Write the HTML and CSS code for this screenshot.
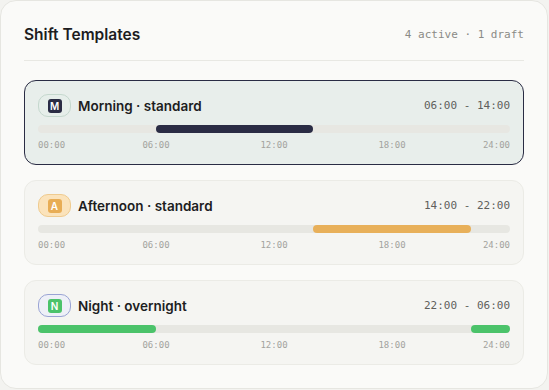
FILE: index.html
```html
<!DOCTYPE html>
<html>
<head>
<meta charset="utf-8">
<link rel="stylesheet" href="styles.css">
</head>
<body>
<div class="panel">
  <div class="panel-head">
    <h1 class="panel-title">Shift Templates</h1>
    <span class="panel-meta">4 active · 1 draft</span>
  </div>
  <div class="list">
    <div class="shift shift--active">
      <div class="shift-top">
        <span class="badge badge--m"><span class="badge-sq">M</span></span>
        <span class="shift-name">Morning · standard</span>
        <span class="shift-time">06:00 - 14:00</span>
      </div>
      <div class="track">
        <span class="bar bar--navy" style="left:25%;width:33.333%"></span>
      </div>
      <div class="ticks">
        <span class="tick tick--first">00:00</span>
        <span class="tick">06:00</span>
        <span class="tick">12:00</span>
        <span class="tick">18:00</span>
        <span class="tick tick--last">24:00</span>
      </div>
    </div>
    <div class="shift">
      <div class="shift-top">
        <span class="badge badge--a"><span class="badge-sq">A</span></span>
        <span class="shift-name">Afternoon · standard</span>
        <span class="shift-time">14:00 - 22:00</span>
      </div>
      <div class="track">
        <span class="bar bar--orange" style="left:58.333%;width:33.333%"></span>
      </div>
      <div class="ticks">
        <span class="tick tick--first">00:00</span>
        <span class="tick">06:00</span>
        <span class="tick">12:00</span>
        <span class="tick">18:00</span>
        <span class="tick tick--last">24:00</span>
      </div>
    </div>
    <div class="shift">
      <div class="shift-top">
        <span class="badge badge--n"><span class="badge-sq">N</span></span>
        <span class="shift-name">Night · overnight</span>
        <span class="shift-time">22:00 - 06:00</span>
      </div>
      <div class="track">
        <span class="bar bar--green" style="left:0;width:25%"></span>
        <span class="bar bar--green" style="left:91.667%;width:8.333%"></span>
      </div>
      <div class="ticks">
        <span class="tick tick--first">00:00</span>
        <span class="tick">06:00</span>
        <span class="tick">12:00</span>
        <span class="tick">18:00</span>
        <span class="tick tick--last">24:00</span>
      </div>
    </div>
  </div>
</div>
</body>
</html>
```
FILE: styles.css
```css
* { box-sizing: border-box; }
html, body { margin: 0; padding: 0; background: #f3f3f0; }
body {
  font-family: Inter, "Noto Sans", sans-serif;
  color: #1d1d1f;
}
.panel {
  width: 548px;
  background: #fafaf8;
  border: 1px solid #e6e6e1;
  border-radius: 16px;
  padding: 23px 23px 23px;
}
.panel-head {
  display: flex;
  align-items: center;
  justify-content: space-between;
  height: 37px;
  padding-bottom: 15px;
  border-bottom: 1px solid #e8e8e3;
}
.panel-title {
  margin: 0;
  font-size: 15.5px;
  font-weight: 600;
  line-height: 20px;
  letter-spacing: 0;
}
.panel-meta {
  font-family: "DejaVu Sans Mono", monospace;
  font-size: 11px;
  color: #8a8a86;
  line-height: 20px;
}
.list {
  display: flex;
  flex-direction: column;
  gap: 15px;
  margin-top: 19px;
}
.shift {
  background: #f5f5f2;
  border: 1px solid #ebebe6;
  border-radius: 12px;
  padding: 13px 13px 13px;
}
.shift--active {
  background: #e8eeeb;
  border-color: #2a2c44;
}
.shift-top {
  display: flex;
  align-items: center;
  height: 23px;
}
.badge {
  display: flex;
  align-items: center;
  justify-content: center;
  width: 33px;
  height: 23px;
  border-radius: 10px;
  border: 1px solid;
  margin-right: 7px;
}
.badge-sq {
  display: flex;
  align-items: center;
  justify-content: center;
  width: 14px;
  height: 14px;
  border-radius: 3px;
  color: #fff;
  font-size: 10px;
  font-weight: 600;
  line-height: 1;
}
.badge--m { background: #e6eeea; border-color: #c5d8ce; }
.badge--m .badge-sq { background: #2a2c44; }
.badge--a { background: #fbe3bb; border-color: #efcb8f; }
.badge--a .badge-sq { background: #e8ad55; }
.badge--n { background: #eef0f7; border-color: #9aa4d4; }
.badge--n .badge-sq { background: #4bc36a; }
.shift-name {
  font-size: 13.5px;
  font-weight: 600;
  flex: 1;
}
.shift-time {
  font-family: "DejaVu Sans Mono", monospace;
  font-size: 11px;
  color: #5f5f5c;
}
.track {
  position: relative;
  height: 8px;
  border-radius: 4px;
  background: #e7e7e2;
  margin-top: 8px;
}
.bar {
  position: absolute;
  top: 0;
  height: 8px;
  border-radius: 4px;
}
.bar--navy { background: #2a2c44; }
.bar--orange { background: #e8b05a; }
.bar--green { background: #4bc36a; }
.ticks {
  display: flex;
  margin-top: 7px;
  font-family: "DejaVu Sans Mono", monospace;
  font-size: 9px;
  line-height: 11px;
  color: #a3a39e;
}
.tick { flex: 1; text-align: center; }
.tick--first { flex: 0.5; text-align: left; }
.tick--last { flex: 0.5; text-align: right; }
```
